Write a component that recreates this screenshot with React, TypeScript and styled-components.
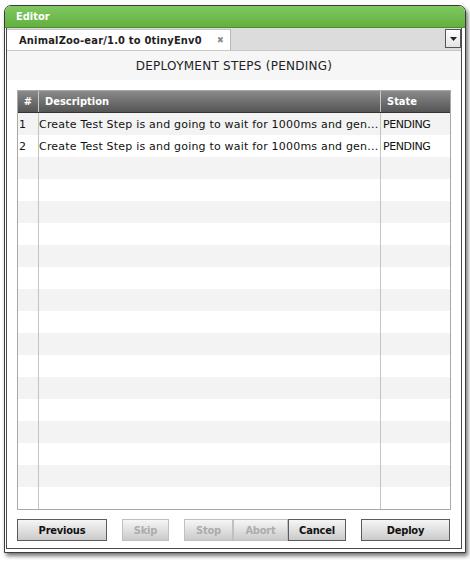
import React from "react";
import styled, { createGlobalStyle } from "styled-components";

const Global = createGlobalStyle`
  html, body { margin: 0; padding: 0; background: #ffffff; }
  body { font-family: "DejaVu Sans", Verdana, sans-serif; font-size: 11px; color: #111; }
`;

const BOLD = `"DejaVu Sans Condensed", "DejaVu Sans", Verdana, sans-serif`;

const Page = styled.div`
  padding: 5px 0 0 4px;
  width: 470px;
  height: 562px;
  box-sizing: border-box;
`;

const Window = styled.div`
  width: 462px;
  height: 548px;
  box-sizing: border-box;
  border: 1px solid #3c3c3c;
  border-radius: 7px 7px 0 0;
  background: #ffffff;
  box-shadow: 2px 3px 4px rgba(0, 0, 0, 0.55);
  display: flex;
  flex-direction: column;
  overflow: hidden;
`;

const TitleBar = styled.div`
  height: 21px;
  flex: none;
  background: linear-gradient(#80c860, #62b03f);
  color: #ffffff;
  font-family: ${BOLD};
  font-weight: bold;
  font-size: 11px;
  display: flex;
  align-items: center;
  padding-left: 11px;
  border-bottom: 1px solid #4b8d2f;
`;

const Body = styled.div`
  flex: 1;
  padding: 0 3px 3px 1px;
  display: flex;
  min-height: 0;
`;

const Panel = styled.div`
  flex: 1;
  border: 1px solid #4a4a4a;
  border-top: none;
  display: flex;
  flex-direction: column;
  min-height: 0;
`;

const TabBar = styled.div`
  height: 22px;
  flex: none;
  background: #dcdcdc;
  display: flex;
  align-items: flex-end;
  justify-content: space-between;
  border-bottom: 1px solid #c8c8c8;
`;

const Tab = styled.div`
  height: 21px;
  width: 224px;
  background: #ffffff;
  box-sizing: border-box;
  border-right: 1px solid #b8b8b8;
  border-top: 1px solid #c4c4c4;
  display: flex;
  align-items: center;
  justify-content: space-between;
  padding: 0 6px 0 12px;
  font-family: ${BOLD};
  font-weight: bold;
  font-size: 11px;
  letter-spacing: 0.2px;
  color: #222;
  white-space: nowrap;
`;

const TabClose = styled.span`
  color: #8a8a8a;
  font-size: 9px;
  font-weight: bold;
`;

const MenuButton = styled.div`
  width: 16px;
  height: 19px;
  margin-bottom: 2px;
  box-sizing: border-box;
  border: 1px solid #555;
  background: linear-gradient(#ffffff, #e4e4e4);
  display: flex;
  align-items: center;
  justify-content: center;
`;

const Heading = styled.div`
  height: 29px;
  flex: none;
  background: #f6f6f6;
  display: flex;
  align-items: center;
  justify-content: center;
  font-size: 12px;
  letter-spacing: 0.25px;
  color: #222;
`;

const Table = styled.div`
  margin: 10px 10px 0 10px;
  border: 1px solid #a8a8a8;
  display: flex;
  flex-direction: column;
  flex: none;
`;

const COLS = "20px 342px 1fr";

const HeaderRow = styled.div`
  display: grid;
  grid-template-columns: ${COLS};
  height: 21px;
  background: linear-gradient(#8a8a8a, #555555);
  border-bottom: 1px solid #333;
  color: #ffffff;
  font-family: ${BOLD};
  font-weight: bold;
`;

const HeadCell = styled.div<{ $center?: boolean }>`
  display: flex;
  align-items: center;
  justify-content: ${(p) => (p.$center ? "center" : "flex-start")};
  padding-left: ${(p) => (p.$center ? "0" : "6px")};
  border-left: 1px solid #c8c8c8;
  &:first-child { border-left: none; }
`;

const Row = styled.div<{ $odd: boolean }>`
  display: grid;
  grid-template-columns: ${COLS};
  height: 22px;
  background: ${(p) => (p.$odd ? "#f3f3f3" : "#ffffff")};
`;

const Cell = styled.div<{ $pad: number; $spacing?: number }>`
  display: flex;
  align-items: center;
  padding-left: ${(p) => p.$pad}px;
  letter-spacing: ${(p) => p.$spacing ?? 0}px;
  white-space: nowrap;
  overflow: hidden;
  border-left: 1px solid #c4c4c4;
  &:first-child { border-left: none; }
`;

const Buttons = styled.div`
  display: flex;
  align-items: center;
  margin: 9px 10px 0 10px;
`;

const Btn = styled.button<{ $w: number; $disabled?: boolean; $gap?: number }>`
  width: ${(p) => p.$w}px;
  height: 22px;
  margin-left: ${(p) => p.$gap ?? 0}px;
  box-sizing: border-box;
  border: 1px solid ${(p) => (p.$disabled ? "#c0c0c0" : "#5c5c5c")};
  background: linear-gradient(#f6f6f6, #cacaca);
  color: ${(p) => (p.$disabled ? "#acacac" : "#111")};
  font-family: ${BOLD};
  font-size: 11px;
  font-weight: bold;
  letter-spacing: -0.2px;
  padding: 0;
  cursor: default;
`;

const rows = [
  { n: "1", d: "Create Test Step is and going to wait for 1000ms and gen...", s: "PENDING" },
  { n: "2", d: "Create Test Step is and going to wait for 1000ms and gen...", s: "PENDING" },
];

export default function App() {
  const all = Array.from({ length: 18 }, (_, i) => rows[i] ?? { n: "", d: "", s: "" });
  return (
    <Page>
      <Global />
      <Window>
        <TitleBar>Editor</TitleBar>
        <Body>
          <Panel>
            <TabBar>
              <Tab>
                <span>AnimalZoo-ear/1.0 to 0tinyEnv0</span>
                <TabClose>✖</TabClose>
              </Tab>
              <MenuButton>
                <svg width="7" height="4" viewBox="0 0 7 4">
                  <path d="M0 0h7L3.5 4z" fill="#222" />
                </svg>
              </MenuButton>
            </TabBar>
            <Heading>DEPLOYMENT STEPS (PENDING)</Heading>
            <Table>
              <HeaderRow>
                <HeadCell $center>#</HeadCell>
                <HeadCell>Description</HeadCell>
                <HeadCell>State</HeadCell>
              </HeaderRow>
              {all.map((r, i) => (
                <Row key={i} $odd={i % 2 === 0}>
                  <Cell $pad={1}>{r.n}</Cell>
                  <Cell $pad={0} $spacing={0.2}>{r.d}</Cell>
                  <Cell $pad={2} $spacing={-0.4}>{r.s}</Cell>
                </Row>
              ))}
            </Table>
            <Buttons>
              <Btn $w={90}>Previous</Btn>
              <Btn $w={47} $gap={15} $disabled>Skip</Btn>
              <Btn $w={49} $gap={15} $disabled>Stop</Btn>
              <Btn $w={55} $disabled>Abort</Btn>
              <Btn $w={58}>Cancel</Btn>
              <Btn $w={89} $gap={15}>Deploy</Btn>
            </Buttons>
          </Panel>
        </Body>
      </Window>
    </Page>
  );
}
